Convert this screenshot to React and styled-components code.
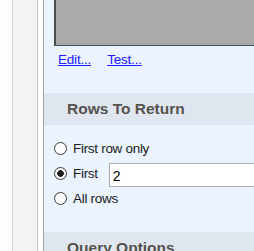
import styled, { createGlobalStyle } from 'styled-components'

const Global = createGlobalStyle`
  html, body {
    margin: 0;
    padding: 0;
    background: #ffffff;
    overflow: hidden;
  }
`;

const Shell = styled.div`
  display: flex;
  height: 251px;
  width: 254px;
  overflow: hidden;
  font-family: "Liberation Sans", Arial, sans-serif;
`;

const Gutter = styled.div`
  width: 12px;
  flex-shrink: 0;
  background: #fdfdfd;
  border-right: 1px solid #d9d9d9;
`;

const Strip = styled.div`
  width: 24px;
  flex-shrink: 0;
  background: #f3f3f3;
  border-right: 1px solid #c6c6c6;
`;

const Gap = styled.div`
  width: 5px;
  flex-shrink: 0;
  background: #ffffff;
  border-right: 1px solid #a3a3a3;
`;

const Panel = styled.div`
  flex: 1;
  min-width: 0;
  background: #eaf3fe;
  display: flex;
  flex-direction: column;
`;

const Preview = styled.div`
  height: 48px;
  flex-shrink: 0;
  margin: -2px -20px 0 10px;
  box-sizing: border-box;
  background: #aaaaaa;
  border: 1px solid #4d4d4d;
  border-left-width: 2px;
`;

const Links = styled.div`
  display: flex;
  gap: 16px;
  padding: 6px 0 0 14px;
  height: 47px;
  flex-shrink: 0;
  box-sizing: border-box;
`;

const Link = styled.a`
  color: #2020ff;
  font-size: 13.5px;
  letter-spacing: -0.2px;
  line-height: 16px;
  text-decoration: underline;
  cursor: pointer;
`;

const Section = styled.div`
  height: 32px;
  flex-shrink: 0;
  display: flex;
  align-items: center;
  padding-left: 23px;
  background: #dfe6ef;
  color: #55524e;
  font-size: 15.5px;
  font-weight: bold;
  white-space: nowrap;
  margin-top: ${p => p.$top || 0}px;
`;

const Options = styled.div`
  display: flex;
  flex-direction: column;
  flex-shrink: 0;
  padding: 11px 0 0 9px;
`;

const Row = styled.label`
  display: flex;
  align-items: center;
  height: 25px;
  gap: 6px;
  font-size: 13.5px;
  letter-spacing: -0.3px;
  color: #1a1a1a;
  white-space: nowrap;
`;

const Radio = styled.input.attrs({ type: 'radio' })`
  appearance: none;
  margin: 0 0 0 1px;
  width: 13px;
  height: 13px;
  border-radius: 50%;
  border: 1px solid #3c3c3c;
  background: radial-gradient(circle, #ffffff 55%, #ececec 100%);
  box-sizing: border-box;
  flex-shrink: 0;

  &:checked {
    background: radial-gradient(circle, #1f1f1f 0 3px, #f4f4f4 3.6px);
  }
`;

const Count = styled.input`
  width: 160px;
  height: 24px;
  box-sizing: border-box;
  margin: 2px 0 0 5px;
  align-self: flex-start;
  border: 1px solid #adadad;
  background: #ffffff;
  padding: 2px 3px 0;
  font-family: "Liberation Sans", Arial, sans-serif;
  font-size: 14px;
  color: #000;
  outline: none;
`;

export default function App() {
  return (
    <>
      <Global />
      <Shell>
        <Gutter />
        <Strip />
        <Gap />
        <Panel>
          <Preview />
          <Links>
            <Link>Edit...</Link>
            <Link>Test...</Link>
          </Links>
          <Section>Rows To Return</Section>
          <Options>
            <Row>
              <Radio name="rows" />
              First row only
            </Row>
            <Row>
              <Radio name="rows" defaultChecked />
              First
              <Count defaultValue="2" />
            </Row>
            <Row>
              <Radio name="rows" />
              All rows
            </Row>
          </Options>
          <Section $top={21}>Query Options</Section>
        </Panel>
      </Shell>
    </>
  )
}
